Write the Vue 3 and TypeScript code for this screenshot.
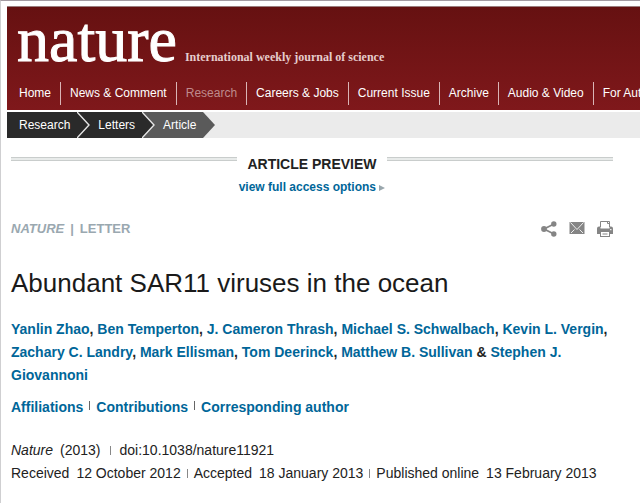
<script setup lang="ts">
interface NavItem {
  label: string
  current?: boolean
}

const navItems: NavItem[] = [
  { label: 'Home' },
  { label: 'News & Comment' },
  { label: 'Research', current: true },
  { label: 'Careers & Jobs' },
  { label: 'Current Issue' },
  { label: 'Archive' },
  { label: 'Audio & Video' },
  { label: 'For Authors' },
]

const crumbs: string[] = ['Research', 'Letters', 'Article']

const authors: string[] = [
  'Yanlin Zhao',
  'Ben Temperton',
  'J. Cameron Thrash',
  'Michael S. Schwalbach',
  'Kevin L. Vergin',
  'Zachary C. Landry',
  'Mark Ellisman',
  'Tom Deerinck',
  'Matthew B. Sullivan',
  'Stephen J. Giovannoni',
]

const authorLinks: string[] = ['Affiliations', 'Contributions', 'Corresponding author']

function separator(index: number): string {
  if (index < authors.length - 2) return ', '
  return index === authors.length - 2 ? ' & ' : ''
}
</script>

<template>
  <div class="page">
    <header class="masthead">
      <div class="brand">
        <a class="logo" href="#">nature</a>
        <span class="tagline">International weekly journal of science</span>
      </div>
      <nav class="nav" aria-label="Main">
        <a
          v-for="item in navItems"
          :key="item.label"
          href="#"
          :class="['nav-link', { current: item.current }]"
        >{{ item.label }}</a>
      </nav>
    </header>

    <nav class="crumbs" aria-label="Breadcrumb">
      <a
        v-for="(crumb, i) in crumbs"
        :key="crumb"
        href="#"
        :class="['crumb', { last: i === crumbs.length - 1 }]"
      >
        <span>{{ crumb }}</span>
        <svg class="arrow" width="14" height="26" viewBox="0 0 14 26" aria-hidden="true">
          <path class="arrow-fill" d="M0 0 L12 13 L0 26 Z" />
          <path v-if="i < crumbs.length - 1" class="arrow-line" d="M0 0 L12 13 L0 26" />
        </svg>
      </a>
    </nav>

    <main class="content">
      <section class="preview">
        <div class="preview-row">
          <span class="rule"></span>
          <h2 class="preview-title">ARTICLE PREVIEW</h2>
          <span class="rule"></span>
        </div>
        <a class="access" href="#">
          view full access options
          <svg width="6" height="6" viewBox="0 0 6 6" aria-hidden="true">
            <path d="M0 0 L6 3 L0 6 Z" fill="#9aa7ad" />
          </svg>
        </a>
      </section>

      <div class="kind-row">
        <p class="kind"><em>NATURE</em><span>|</span><span>LETTER</span></p>
        <div class="tools">
          <button type="button" class="tool" aria-label="Share">
            <svg width="16" height="16" viewBox="0 0 16 16">
              <path d="M13 3 L3 8 L13 13" fill="none" stroke="#858585" stroke-width="1.8" />
              <circle cx="3" cy="8" r="2.9" fill="#858585" />
              <circle cx="12.8" cy="3" r="2.7" fill="#858585" />
              <circle cx="12.8" cy="13" r="2.7" fill="#858585" />
            </svg>
          </button>
          <button type="button" class="tool" aria-label="Email">
            <svg width="16" height="16" viewBox="0 0 16 16">
              <rect x="0.5" y="1" width="15" height="12" fill="#858585" />
              <path
                d="M1.5 1.5 L8 8.5 L14.5 1.5 M2 12 L5.5 8.5 M14 12 L10.5 8.5"
                fill="none"
                stroke="#eee"
                stroke-width="1"
              />
            </svg>
          </button>
          <button type="button" class="tool" aria-label="Print">
            <svg width="16" height="16" viewBox="0 0 16 16">
              <path d="M3.5 6 V0.5 H12.5 V6" fill="#fff" stroke="#858585" />
              <path d="M10.5 0.5 V2.5 H12.5" fill="none" stroke="#858585" />
              <path d="M0 7.5 Q0 5.5 2 5.5 H3.5 V7.5 H12.5 V5.5 H14 Q16 5.5 16 7.5 V13 H0 Z" fill="#858585" />
              <rect x="13" y="8" width="1.5" height="1.2" fill="#eee" />
              <rect x="3.5" y="10.5" width="9" height="5" fill="#fff" stroke="#858585" />
              <path d="M5.5 13 H10.5" stroke="#858585" />
            </svg>
          </button>
        </div>
      </div>

      <h1 class="title">Abundant SAR11 viruses in the ocean</h1>

      <p class="authors">
        <template v-for="(author, i) in authors" :key="author"
          ><a href="#">{{ author }}</a>{{ separator(i) }}</template>
      </p>

      <ul class="author-links">
        <li v-for="link in authorLinks" :key="link"><a href="#">{{ link }}</a></li>
      </ul>

      <div class="citation">
        <p class="cite-row">
          <span class="pair"><em>Nature</em><span>(2013)</span></span>
          <span class="bar wide"></span>
          <span>doi:10.1038/nature11921</span>
        </p>
        <p class="cite-row">
          <span class="pair"><span>Received</span><time>12 October 2012</time></span>
          <span class="bar"></span>
          <span class="pair"><span>Accepted</span><time>18 January 2013</time></span>
          <span class="bar"></span>
          <span class="pair"><span>Published online</span><time>13 February 2013</time></span>
        </p>
      </div>
    </main>
  </div>
</template>

<style>
body {
  margin: 0;
  background: #fff;
}
</style>

<style scoped>
.page {
  box-sizing: border-box;
  min-height: 100vh;
  padding: 5px 0 0 6px;
  border-top: 1px solid #a39ba2;
  border-left: 1px solid #cfcfd1;
  overflow: hidden;
  color: #222;
  font-family: 'Liberation Sans', Arial, sans-serif;
  font-size: 14px;
}

a {
  color: #006699;
  text-decoration: none;
}

h1,
h2,
p,
ul {
  margin: 0;
  padding: 0;
}

.masthead {
  border-top: 1px solid #9b7d7e;
  background: linear-gradient(#661111, #7f181b);
  overflow: hidden;
}

.brand {
  display: flex;
  align-items: baseline;
  gap: 8px;
  padding: 0 10px;
  height: 75px;
}

.logo {
  color: #fff;
  font-family: 'Liberation Serif', 'Times New Roman', serif;
  font-size: 64px;
  line-height: 66px;
  -webkit-text-stroke: 1px #fff;
}

.tagline {
  color: #e6cccc;
  font-family: 'Liberation Serif', 'Times New Roman', serif;
  font-size: 12px;
  font-weight: bold;
  white-space: nowrap;
}

.nav {
  display: flex;
  padding: 0 3px 5px;
}

.nav-link {
  flex: none;
  padding: 0 9px;
  border-left: 1px solid #d9b5b6;
  color: #fff;
  font-size: 12px;
  line-height: 23px;
}

.nav-link:first-child {
  border-left: 0;
}

.nav-link.current {
  color: #bf8a8c;
}

.crumbs {
  display: flex;
  margin-top: 2px;
  background: #ebebeb;
}

.crumb {
  position: relative;
  padding: 0 7px 0 21px;
  background: #2a2a2a;
  color: #fff;
  font-size: 12px;
  line-height: 26px;
}

.crumb:first-child {
  padding-left: 12px;
}

.crumb.last {
  background: #5a5a5a;
}

.arrow {
  position: absolute;
  top: 0;
  left: 100%;
  z-index: 1;
}

.arrow-fill {
  fill: #2a2a2a;
}

.last .arrow-fill {
  fill: #5a5a5a;
}

.arrow-line {
  fill: none;
  stroke: #e6e6e6;
  stroke-width: 1.4;
}

.content {
  padding: 16px 27px 16px 4px;
}

.preview {
  text-align: center;
}

.preview-row {
  display: flex;
  gap: 10px;
}

.rule {
  flex: 1;
  height: 2px;
  margin-top: 3px;
  border: solid #c9cdcc;
  border-width: 1px 0;
  background: #e8ebea;
}

.preview-title {
  font-size: 14px;
  line-height: 20px;
}

.access {
  display: inline-block;
  margin-top: 4px;
  font-size: 12px;
  font-weight: bold;
  line-height: 18px;
}

.kind-row {
  display: flex;
  align-items: center;
  justify-content: space-between;
  margin-top: 23px;
}

.kind {
  display: flex;
  gap: 6px;
  color: #9aa8b0;
  font-size: 13px;
  font-weight: bold;
  line-height: 20px;
}

.tools {
  display: flex;
  gap: 12px;
}

.tool {
  display: flex;
  padding: 0;
  border: 0;
  background: none;
}

.title {
  margin-top: 28px;
  color: #1a1a1a;
  font-size: 26px;
  font-weight: normal;
  line-height: 32px;
}

.authors {
  margin-top: 19px;
  font-weight: bold;
  line-height: 23px;
}

.author-links {
  display: flex;
  margin-top: 9px;
  font-weight: bold;
  line-height: 23px;
  list-style: none;
}

.author-links li {
  display: flex;
}

.author-links li + li::before {
  content: '';
  width: 1px;
  height: 9px;
  margin: 5px 6px 0;
  background: #666;
}

.citation {
  margin-top: 20px;
}

.cite-row {
  display: flex;
  align-items: center;
  line-height: 23px;
  white-space: nowrap;
}

.pair {
  display: flex;
  gap: 7px;
}

.bar {
  width: 1px;
  height: 9px;
  margin: 0 6px;
  background: #888;
}

.bar.wide {
  margin: 0 9px;
}
</style>
